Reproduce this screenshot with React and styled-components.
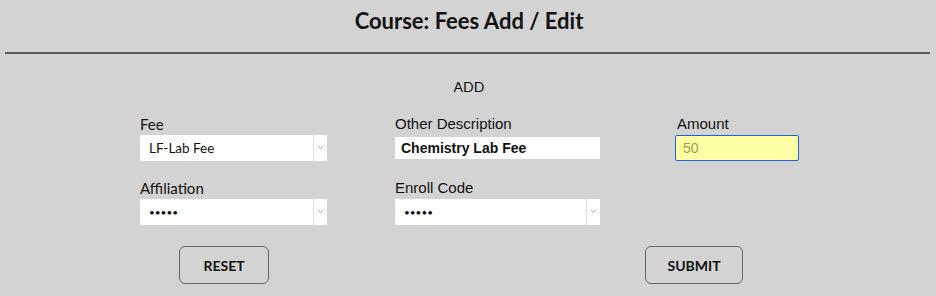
import React from "react";
import styled, { createGlobalStyle } from "styled-components";

const Global = createGlobalStyle`
  html, body { margin: 0; padding: 0; background: #d3d3d3; }
  body { font-family: "Lato", "Liberation Sans", sans-serif; color: #111; }
`;

const Page = styled.div`
  width: 936px;
  height: 296px;
  background: #d3d3d3;
  overflow: hidden;
`;

const Header = styled.h1`
  margin: 0;
  height: 40px;
  display: flex;
  align-items: center;
  justify-content: center;
  font-family: "Lato", sans-serif;
  font-weight: 700;
  font-size: 22px;
  color: #111;
  padding-left: 2px;
`;

const Rule = styled.hr`
  margin: 12px 6px 0 5px;
  border: 0;
  border-top: 2px solid #5c5c5c;
  height: 0;
`;

const SectionTitle = styled.div`
  margin-top: 25px;
  text-align: center;
  font-family: "Lato", sans-serif;
  font-size: 14px;
  line-height: 16px;
  padding-left: 2px;
`;

const Grid = styled.div`
  margin-top: 21px;
  padding-left: 140px;
  display: grid;
  grid-template-columns: 255px 280px 124px;
  row-gap: 19px;
`;

const Field = styled.div`
  display: flex;
  flex-direction: column;
  gap: 2px;
`;

const Label = styled.label`
  display: block;
  height: 16px;
  line-height: 16px;
  font-size: 15px;
  font-family: ${(p) => (p.$alt ? '"Liberation Sans", Arial, sans-serif' : '"Lato", sans-serif')};
  padding-left: ${(p) => p.$indent || 0}px;
  color: #111;
`;

const Slot = styled.div`
  height: 27px;
  display: flex;
  align-items: center;
`;

const Select = styled.div`
  box-sizing: border-box;
  width: ${(p) => p.$w}px;
  height: 26px;
  background: #fff;
  display: flex;
  align-items: center;
`;

const SelectValue = styled.span`
  flex: 1;
  padding-left: 9px;
  font-family: "Lato", sans-serif;
  font-size: ${(p) => (p.$dots ? "10px" : "13.5px")};
  color: #111;
`;

const SelectArrow = styled.span`
  width: 13px;
  height: 100%;
  border-left: 1px solid #dcdcdc;
  display: flex;
  align-items: center;
  justify-content: center;
`;

const TextInput = styled.div`
  box-sizing: border-box;
  width: 205px;
  height: 22px;
  background: #fff;
  display: flex;
  align-items: center;
  padding-left: 6px;
  font-family: "Liberation Sans", Arial, sans-serif;
  font-weight: 700;
  font-size: 14px;
  color: #111;
`;

const AmountInput = styled.div`
  box-sizing: border-box;
  width: 124px;
  height: 26px;
  background: #ffffa6;
  border: 1px solid #1a64d6;
  border-radius: 2px;
  display: flex;
  align-items: center;
  padding-left: 7px;
  font-family: "Liberation Sans", Arial, sans-serif;
  font-size: 14px;
  color: #9c9c50;
`;

const Buttons = styled.div`
  margin-top: 21px;
  padding-left: 179px;
  display: flex;
  gap: 376px;
`;

const Button = styled.button`
  box-sizing: border-box;
  width: ${(p) => p.$w}px;
  height: 38px;
  background: #d3d3d3;
  border: 1px solid #666;
  border-radius: 6px;
  font-family: "Lato", sans-serif;
  font-weight: 700;
  font-size: 14px;
  color: #111;
  padding: 0;
  cursor: pointer;
`;

const Chevron = () => (
  <svg width="7" height="5" viewBox="0 0 7 5">
    <path d="M0.8 1 L3.5 3.6 L6.2 1" fill="none" stroke="#a8a8a8" strokeWidth="1" />
  </svg>
);

const Dropdown = ({ w, value, dots }) => (
  <Select $w={w}>
    <SelectValue $dots={dots}>{value}</SelectValue>
    <SelectArrow>
      <Chevron />
    </SelectArrow>
  </Select>
);

export default function App() {
  return (
    <Page>
      <Global />
      <Header>Course: Fees Add / Edit</Header>
      <Rule />
      <SectionTitle>ADD</SectionTitle>
      <Grid>
        <Field>
          <Label>Fee</Label>
          <Slot>
            <Dropdown w={187} value="LF-Lab Fee" />
          </Slot>
        </Field>
        <Field>
          <Label $alt>Other Description</Label>
          <Slot>
            <TextInput>Chemistry Lab Fee</TextInput>
          </Slot>
        </Field>
        <Field>
          <Label $alt $indent={2}>Amount</Label>
          <Slot>
            <AmountInput>50</AmountInput>
          </Slot>
        </Field>
        <Field>
          <Label>Affiliation</Label>
          <Slot>
            <Dropdown w={187} value="•••••" dots />
          </Slot>
        </Field>
        <Field>
          <Label $alt>Enroll Code</Label>
          <Slot>
            <Dropdown w={205} value="•••••" dots />
          </Slot>
        </Field>
      </Grid>
      <Buttons>
        <Button $w={90}>RESET</Button>
        <Button $w={98}>SUBMIT</Button>
      </Buttons>
    </Page>
  );
}
